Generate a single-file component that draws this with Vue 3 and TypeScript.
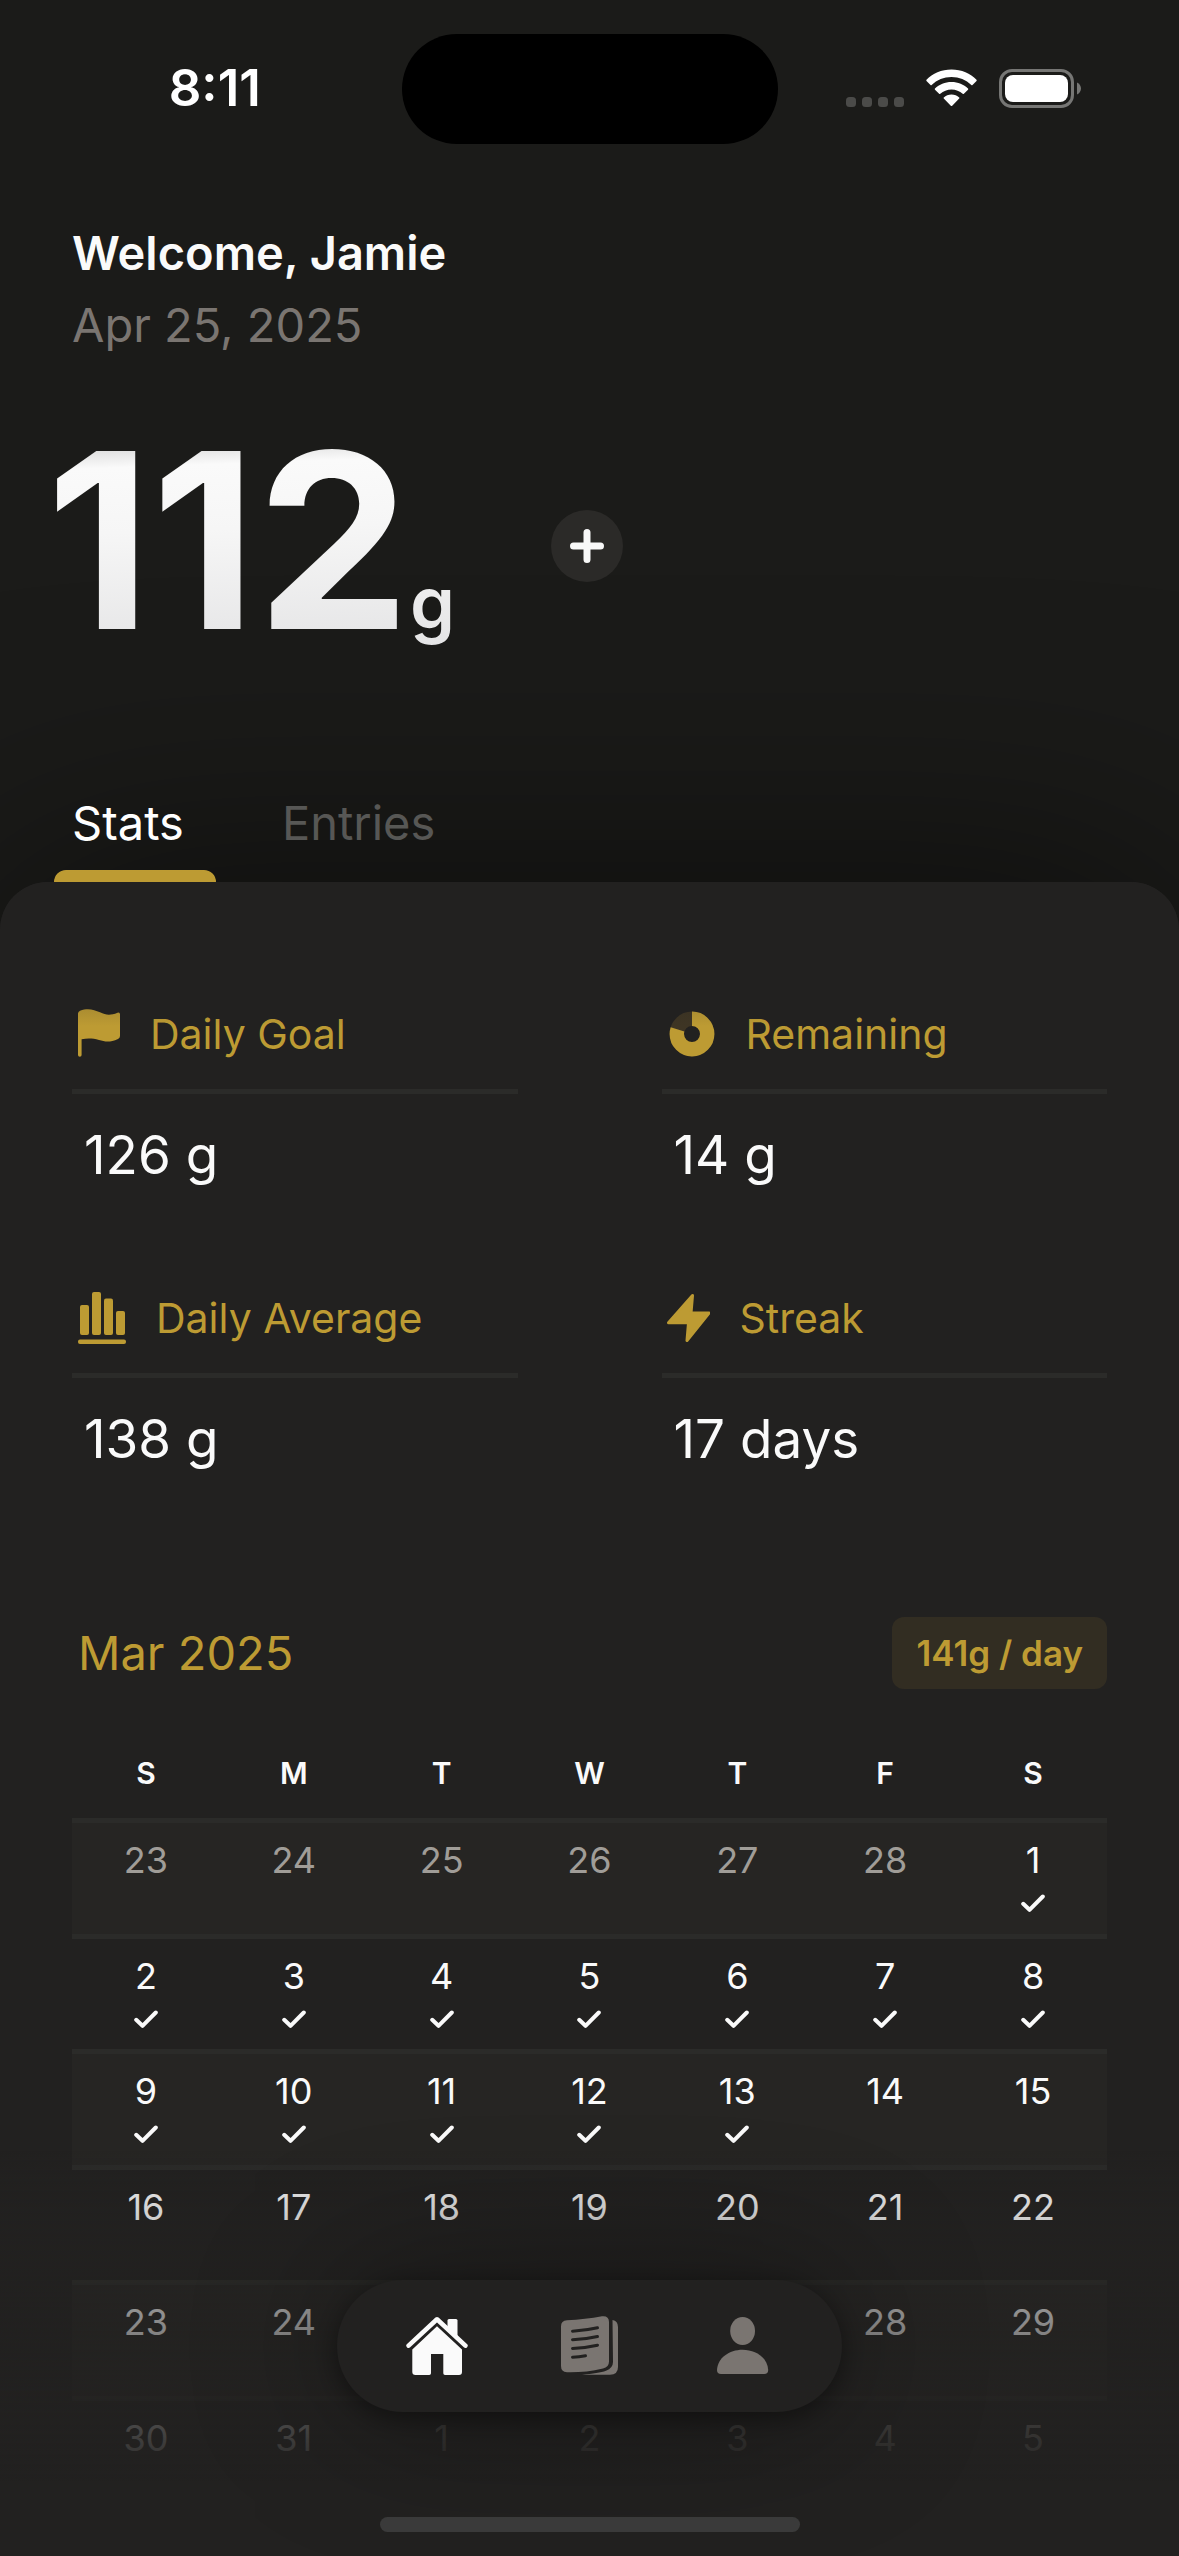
<script setup lang="ts">
import { ref } from 'vue'

interface Day {
  n: number
  outside: boolean
  done: boolean
}

const weekdays = ['Sunday', 'Monday', 'Tuesday', 'Wednesday', 'Thursday', 'Friday', 'Saturday']
const tabs = ['Stats', 'Entries']
const activeTab = ref('Stats')

const lastCompleted = 13
const daysInMonth = 31
const leadingDays = [23, 24, 25, 26, 27, 28]

const cells: Day[] = []
for (const n of leadingDays) cells.push({ n, outside: true, done: false })
for (let n = 1; n <= daysInMonth; n++) cells.push({ n, outside: false, done: n <= lastCompleted })
for (let n = 1; cells.length % 7 !== 0; n++) cells.push({ n, outside: true, done: false })

const weeks: Day[][] = []
for (let i = 0; i < cells.length; i += 7) weeks.push(cells.slice(i, i + 7))
</script>

<template>
  <div class="app">
    <div class="status">
      <span class="time">8:11</span>
      <span class="island"></span>
      <span class="indicators">
        <svg class="dots" width="58" height="11" viewBox="0 0 58 11" fill="#4b4b49" aria-hidden="true">
          <rect width="10" height="10" rx="3.5" />
          <rect x="16" width="10" height="10" rx="3.5" />
          <rect x="32" width="10" height="10" rx="3.5" />
          <rect x="48" width="10" height="10" rx="3.5" />
        </svg>
        <svg width="51" height="38" viewBox="0 0 51 38" fill="#fff" aria-hidden="true">
          <path d="M25.5 .5C35.500 .5 44.500 4.500 50.500 10.700Q51 11.300 50.500 11.900L46.500 15.900Q45.900 16.400 45.300 15.900C40 10.800 33.200 7.900 25.500 7.900S11 10.800 5.700 15.900Q5.100 16.400 4.500 15.900L.5 11.900Q0 11.300 .5 10.700C6.500 4.500 15.500 .5 25.500 .5Z" />
          <path d="M25.500 13C32 13 37.800 15.500 42 19.500Q42.600 20.100 42 20.700L37.900 24.800Q37.300 25.300 36.700 24.800C33.700 22 29.800 20.400 25.500 20.400S17.300 22 14.300 24.800Q13.700 25.300 13.100 24.800L9 20.700Q8.400 20.100 9 19.500C13.200 15.500 19 13 25.500 13Z" />
          <path d="M25.500 25.600C28.500 25.600 31.200 26.700 33.200 28.500Q33.800 29 33.200 29.600L26.200 36.700Q25.500 37.300 24.800 36.700L17.800 29.600Q17.200 29 17.800 28.500C19.800 26.700 22.500 25.600 25.500 25.600Z" />
        </svg>
        <svg width="82" height="39" viewBox="0 0 82 39" aria-hidden="true">
          <rect x="1.500" y="1.500" width="72" height="36" rx="11.500" fill="none" stroke="#767674" stroke-width="3" />
          <rect x="6" y="6" width="63" height="27" rx="8" fill="#fff" />
          <path d="M78 13.500C80.500 14.700 82 17 82 19.500S80.500 24.300 78 25.500Z" fill="#767674" />
        </svg>
      </span>
    </div>

    <header class="greeting">
      <h1>Welcome, Jamie</h1>
      <p>Apr 25, 2025</p>
    </header>

    <section class="hero">
      <p class="total">112<span class="unit">g</span></p>
      <button class="add" type="button" aria-label="Add entry">
        <svg width="34" height="34" viewBox="0 0 34 34" fill="none" stroke="#f8f8f8" stroke-width="7" stroke-linecap="round" aria-hidden="true">
          <path d="M17 3.500V30.500M3.500 17H30.500" />
        </svg>
      </button>
    </section>

    <div class="tabs" role="tablist">
      <button
        v-for="tab in tabs"
        :key="tab"
        type="button"
        role="tab"
        class="tab"
        :class="{ active: tab === activeTab }"
        :aria-selected="tab === activeTab"
        @click="activeTab = tab"
      >
        {{ tab }}
      </button>
    </div>

    <main class="sheet">
      <section class="stats">
        <article class="stat">
          <h2>
            <svg width="48" height="54" viewBox="0 0 48 54" fill="currentColor" aria-hidden="true">
              <path d="M6 6.500Q6 4.600 8 3.700C16 .6 22 2.600 28 5.300C34 8.200 38 8.800 45.500 5.800Q48 5 48 7.500V29Q48 31 46 32C38 35.700 33 34.800 27 33C21 31.400 16 31.200 9.600 32.200V48a1.800 1.800 0 0 1-3.600 0Z" />
            </svg>
            Daily Goal
          </h2>
          <p>126 g</p>
        </article>
        <article class="stat">
          <h2>
            <svg width="54" height="54" viewBox="0 0 54 54" fill="none" stroke-width="14.400" aria-hidden="true">
              <circle cx="30" cy="27" r="15.200" stroke="#3e3524" />
              <circle cx="30" cy="27" r="15.200" stroke="currentColor" pathLength="100" stroke-dasharray="80 20" transform="rotate(-90 30 27)" />
            </svg>
            Remaining
          </h2>
          <p>14 g</p>
        </article>
        <article class="stat">
          <h2>
            <svg width="54" height="54" viewBox="0 0 54 54" fill="currentColor" aria-hidden="true">
              <rect x="8" y="14" width="9" height="30" rx="2" />
              <rect x="20" y="1" width="9" height="43" rx="2" />
              <rect x="32" y="7.500" width="9" height="36.500" rx="2" />
              <rect x="44" y="20" width="9" height="24" rx="2" />
              <rect x="6" y="48.500" width="48" height="4.500" rx="2" />
            </svg>
            Daily Average
          </h2>
          <p>138 g</p>
        </article>
        <article class="stat">
          <h2>
            <svg width="48" height="54" viewBox="0 0 48 54" fill="currentColor" stroke="currentColor" stroke-width="3" stroke-linejoin="round" aria-hidden="true">
              <path d="M30.500 4.500L29 22H47L25 49.500L26.500 31.800H6.500Z" />
            </svg>
            Streak
          </h2>
          <p>17 days</p>
        </article>
      </section>

      <div class="month">
        <h2>Mar 2025</h2>
        <span class="badge">141g / day</span>
      </div>

      <table class="calendar">
        <thead>
          <tr>
            <th v-for="name in weekdays" :key="name" scope="col" :abbr="name">{{ name[0] }}</th>
          </tr>
        </thead>
        <tbody>
          <tr v-for="(week, w) in weeks" :key="w">
            <td v-for="(day, d) in week" :key="d" :class="{ outside: day.outside }">
              {{ day.n }}
              <svg v-if="day.done" width="24" height="18" viewBox="0 0 24 18" fill="none" stroke="currentColor" stroke-width="4" stroke-linecap="round" stroke-linejoin="round" aria-label="Goal met">
                <path d="M2.200 9.800L8.500 15.800L21.800 2.500" />
              </svg>
            </td>
          </tr>
        </tbody>
      </table>
    </main>

    <div class="fade"></div>
    <div class="dock">
      <nav class="pill">
        <a class="current" href="#home" aria-label="Home">
          <svg width="62" height="60" viewBox="0 0 62 60" aria-hidden="true">
            <path d="M41.500 14V4.500Q41.500 3 43 3H50Q51.500 3 51.500 4.500V22Z" fill="currentColor" />
            <path d="M2.600 29.600L31 3.300L59.400 29.600" fill="none" stroke="currentColor" stroke-width="4.600" stroke-linecap="round" stroke-linejoin="round" />
            <path d="M31 10.300L56 33.500V56Q56 59 53 59H39Q37.300 59 37.300 57.300V38H25V57.300Q25 59 23.300 59H9.500Q6.300 59 6.300 56V33.500Z" fill="currentColor" />
          </svg>
        </a>
        <a href="#entries" aria-label="Entries">
          <svg width="58" height="60" viewBox="0 0 58 60" aria-hidden="true">
            <path d="M0 10.500Q0 4.600 6 4.300C18 3.700 30 2.200 41 .2Q48 -.5 48 6V45.500Q48 51 42 52.600C30 55.600 18 56.500 6 56.300Q0 56 0 50Z" fill="currentColor" />
            <path d="M51.500 4Q57 5 57 11V51Q57 58.700 49 58.700H21C32 58 40 56.600 45 54.800Q52 52 52 46Z" fill="currentColor" />
            <path d="M11.500 15.200Q25 14.500 36.500 11.800M11.500 23.800Q25 23.200 36.500 20.500M11.500 32.500Q25 31.800 36.500 29.200M11.500 41.200Q18 41 24.500 39.800" fill="none" stroke="#222120" stroke-width="3" stroke-linecap="round" />
          </svg>
        </a>
        <a href="#profile" aria-label="Profile">
          <svg width="52" height="58" viewBox="0 0 52 58" fill="currentColor" aria-hidden="true">
            <ellipse cx="25.600" cy="14" rx="12.400" ry="14" />
            <path d="M0 53C.6 41 12 32.700 25.600 32.700S50.600 41 51.200 53Q51.200 57 47.200 57H4Q0 57 0 53Z" />
          </svg>
        </a>
      </nav>
      <span class="home-bar"></span>
    </div>
  </div>
</template>

<style>
body {
  margin: 0;
  background: #1b1b19;
}
</style>

<style scoped>
.app {
  display: flex;
  flex-direction: column;
  min-height: 100vh;
  overflow: hidden;
  background: #1b1b19;
  color: #fafafa;
  font-family: Inter, "Liberation Sans", sans-serif;
}

h1,
h2,
p {
  margin: 0;
  font-weight: 400;
}

button {
  padding: 0;
  border: 0;
  background: none;
  color: inherit;
  font: inherit;
}

svg {
  flex: none;
}

/* Kept above the wide shadow that the sheet casts upwards. */
.greeting,
.hero,
.tabs {
  position: relative;
  z-index: 1;
}

.status {
  display: grid;
  grid-template-columns: 1fr 376px 1fr;
  align-items: center;
  padding-top: 34px;
}

.time {
  padding: 0 0 2px 28px;
  color: #fff;
  font-size: 51px;
  font-weight: 600;
  line-height: 60px;
  text-align: center;
}

.island {
  height: 110px;
  border-radius: 55px;
  background: #000;
}

.indicators {
  display: flex;
  justify-content: center;
  align-items: center;
  gap: 22px;
  padding: 0 30px 2px 0;
}

.dots {
  align-self: flex-end;
}

.greeting {
  padding: 73px 72px 0;
  font-size: 47px;
  line-height: 72px;
}

.greeting h1 {
  font-size: 47px;
  font-weight: 600;
}

.greeting p {
  color: #7a7571;
}

.hero {
  display: flex;
  align-items: flex-start;
  gap: 96px;
  padding: 57px 46px 0;
}

.total {
  background: linear-gradient(178deg, #d8d8d8 11%, #fafafa 20%, #f6f6f6 45%, #e4e4e5 95%);
  background-clip: text;
  -webkit-background-clip: text;
  color: transparent;
  font-size: 244px;
  font-weight: 700;
  line-height: 246px;
}

.unit {
  font-size: 72px;
  font-weight: 600;
  line-height: 72px;
}

.add {
  display: flex;
  justify-content: center;
  align-items: center;
  width: 72px;
  height: 72px;
  margin-top: 92px;
  border-radius: 50%;
  background: #2b2a28;
}

.tabs {
  display: flex;
  gap: 48px;
  padding: 129px 54px 0;
}

.tab {
  position: relative;
  padding: 0 32px 29px 18px;
  color: #575755;
  font-size: 47px;
  line-height: 60px;
}

.tab.active {
  color: #fff;
}

.tab.active::after {
  content: "";
  position: absolute;
  right: 0;
  bottom: 0;
  left: 0;
  height: 12px;
  border-radius: 12px 12px 0 0;
  background: #bd9b33;
}

.sheet {
  position: relative;
  flex: 1;
  padding: 122px 72px 0;
  border-radius: 48px 48px 0 0;
  background: #222120;
  box-shadow: 0 0 380px rgba(0, 0, 0, 0.6);
}

.sheet::before {
  content: "";
  position: absolute;
  top: 0;
  right: 0;
  left: 0;
  height: 144px;
  border-radius: 48px 48px 0 0;
  background: linear-gradient(#222120, rgba(34, 33, 32, 0));
}

.stats {
  display: grid;
  grid-template-columns: 1fr 1fr;
  gap: 97px 144px;
}

.stat h2 {
  display: flex;
  align-items: center;
  gap: 30px;
  padding-bottom: 25px;
  border-bottom: 5px solid #2b2b29;
  color: #bd9b33;
  font-size: 41px;
  line-height: 60px;
}

.stat p {
  padding: 25px 12px 0;
  font-size: 53px;
  line-height: 72px;
}

.month {
  display: flex;
  justify-content: space-between;
  align-items: center;
  margin-top: 142px;
  padding-left: 6px;
  color: #bd9b33;
}

.month h2 {
  font-size: 47px;
  line-height: 72px;
}

.badge {
  padding: 0 24px;
  border-radius: 12px;
  background: #322d22;
  font-size: 35px;
  font-weight: 600;
  line-height: 72px;
}

.calendar {
  width: 100%;
  margin-top: 39px;
  border-spacing: 0;
  table-layout: fixed;
}

th {
  height: 90px;
  padding: 0;
  font-size: 30px;
  font-weight: 600;
}

td {
  box-sizing: border-box;
  height: 116px;
  padding: 17px 0 0;
  border-top: 5px solid #2b2b29;
  font-size: 36px;
  line-height: 40px;
  text-align: center;
  vertical-align: top;
}

td svg {
  display: block;
  margin: 14px auto 0;
}

tr:nth-child(odd) td {
  background: #262523;
}

tr:nth-child(even) td {
  height: 115px;
}

.outside {
  color: #a09d98;
}

.fade {
  position: fixed;
  right: 0;
  bottom: 0;
  left: 0;
  height: 406px;
  background: linear-gradient(rgba(34, 33, 32, 0), #222120 82%);
  pointer-events: none;
}

.dock {
  position: fixed;
  right: 0;
  bottom: 0;
  left: 0;
  display: flex;
  flex-direction: column;
  align-items: center;
  gap: 105px;
  padding-bottom: 24px;
}

.pill {
  display: flex;
  padding: 0 23px;
  border-radius: 66px;
  background: #222120;
  box-shadow: 0 6px 24px rgba(0, 0, 0, 0.4), 0 0 150px rgba(0, 0, 0, 0.4);
}

.pill a {
  display: flex;
  justify-content: center;
  align-items: center;
  width: 153px;
  height: 132px;
  color: #7a7571;
}

.pill .current {
  color: #fafafa;
}

.home-bar {
  width: 420px;
  height: 15px;
  border-radius: 8px;
  background: #3a3a3a;
}
</style>
